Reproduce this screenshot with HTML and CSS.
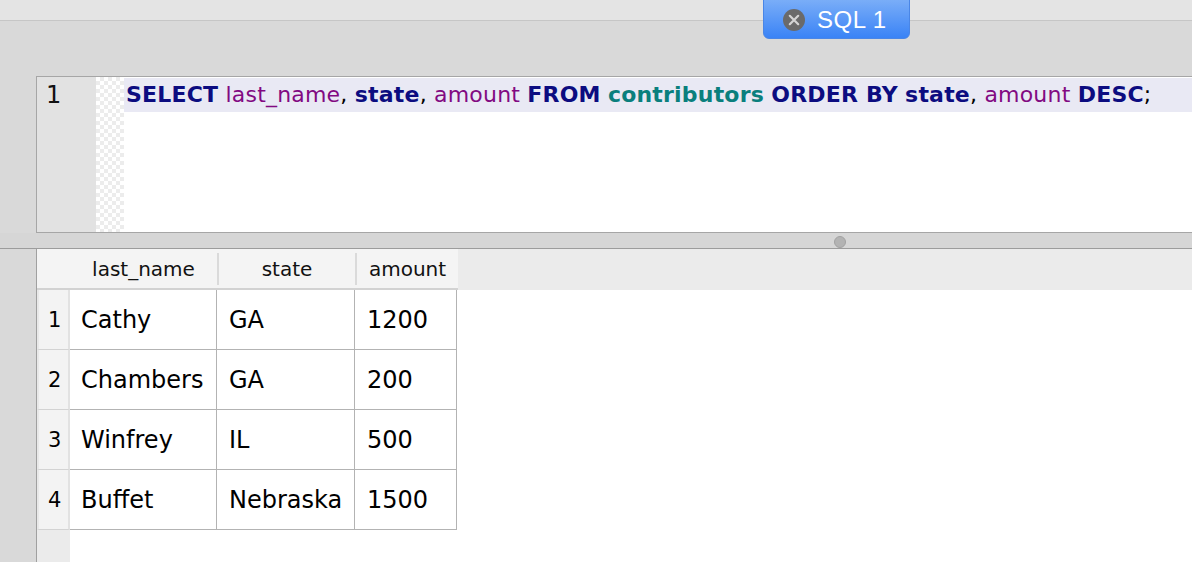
FILE: index.html
```html
<!DOCTYPE html>
<html>
<head>
<meta charset="utf-8">
<link rel="stylesheet" href="styles.css">
</head>
<body>
<div class="titlebar"></div>
<div class="tab">
  <svg class="tab-close" width="22" height="22" viewBox="0 0 22 22">
    <circle cx="11" cy="11" r="11" fill="#6a6a6a"/>
    <path d="M6.8 6.8 L15.2 15.2 M15.2 6.8 L6.8 15.2" stroke="#d4d4d4" stroke-width="2.2" stroke-linecap="round"/>
  </svg>
  <span class="tab-label">SQL 1</span>
</div>
<div class="main">
  <div class="editor">
    <div class="gutter"><div class="lineno">1</div></div>
    <div class="checker"></div>
    <div class="code">
      <div class="line current"><span class="kw">SELECT</span> <span class="id">last_name</span>, <span class="kw">state</span>, <span class="id">amount</span> <span class="kw">FROM</span> <span class="tbl">contributors</span> <span class="kw">ORDER BY</span> <span class="kw">state</span>, <span class="id">amount</span> <span class="kw">DESC</span>;</div>
    </div>
  </div>
  <div class="splitter"><div class="grip"></div></div>
  <div class="results">
    <div class="hrow">
      <div class="hcols">
        <div class="hcell c-num"></div>
        <div class="hcell c-name">last_name</div>
        <div class="hcell c-state sep">state</div>
        <div class="hcell c-amt sep">amount</div>
      </div>
    </div>
    <div class="row">
      <div class="num">1</div><div class="cell c-name">Cathy</div><div class="cell c-state">GA</div><div class="cell c-amt">1200</div>
    </div>
    <div class="row">
      <div class="num">2</div><div class="cell c-name">Chambers</div><div class="cell c-state">GA</div><div class="cell c-amt">200</div>
    </div>
    <div class="row">
      <div class="num">3</div><div class="cell c-name">Winfrey</div><div class="cell c-state">IL</div><div class="cell c-amt">500</div>
    </div>
    <div class="row">
      <div class="num">4</div><div class="cell c-name">Buffet</div><div class="cell c-state">Nebraska</div><div class="cell c-amt">1500</div>
    </div>
  </div>
</div>
</body>
</html>
```
FILE: styles.css
```css
html, body {
  margin: 0;
  padding: 0;
  height: 100%;
  overflow: hidden;
}
body {
  background: #d9d9d9;
  font-family: "DejaVu Sans", "Liberation Sans", sans-serif;
  color: #000;
  position: relative;
}
.titlebar {
  height: 20px;
  background: #e4e4e4;
  border-bottom: 1px solid #c6c6c6;
}
.tab {
  position: absolute;
  left: 763px;
  top: -6px;
  width: 147px;
  height: 45px;
  box-sizing: border-box;
  border-radius: 6px;
  background: linear-gradient(#82b3f8, #3a83f6);
  border: 1px solid #4a86e6;
  display: flex;
  align-items: center;
  padding: 6px 0 0 19px;
  gap: 12px;
}
.tab-close { flex: none; }
.tab-label {
  font-family: "Liberation Sans", "Helvetica", sans-serif;
  color: #fff;
  font-size: 24px;
  letter-spacing: 0.5px;
  line-height: 1;
  margin-top: 1px;
}
.main {
  padding: 55px 0 0 36px;
  height: calc(100% - 21px);
  box-sizing: border-box;
  display: flex;
  flex-direction: column;
}
.editor {
  height: 157px;
  box-sizing: border-box;
  border: 1px solid #a6a6a6;
  border-right: none;
  display: flex;
  flex: none;
}
.gutter {
  width: 59px;
  background: #e2e2e2;
  flex: none;
}
.lineno {
  font-size: 24px;
  line-height: 34px;
  margin-top: 1px;
  padding-left: 9px;
  color: #111;
}
.checker {
  width: 28px;
  flex: none;
  background-color: #fff;
  background-image: repeating-conic-gradient(#ececec 0 25%, #fff 0 50%);
  background-size: 8px 8px;
}
.code {
  flex: 1;
  background: #fff;
  padding-top: 1px;
}
.line {
  font-size: 22px;
  letter-spacing: 0.2px;
  line-height: 34px;
  height: 34px;
  padding-left: 2px;
  white-space: nowrap;
  color: #000;
}
.line.current { background: #e9e9f4; }
.kw { color: #0c0c80; font-weight: bold; }
.id { color: #820a82; }
.tbl { color: #0a7f7d; font-weight: bold; }

.splitter {
  height: 15px;
  flex: none;
  margin-left: -36px;
  padding-left: 36px;
  border-bottom: 1px solid #9c9c9c;
  background: #d6d6d6;
  display: flex;
  align-items: center;
}
.grip {
  width: 12px;
  height: 12px;
  box-sizing: border-box;
  border-radius: 50%;
  background: #b3b3b3;
  border: 1px solid #a2a2a2;
  margin-left: 798px;
  margin-top: 3px;
}
.results {
  flex: 1;
  border-left: 1px solid #a0a0a0;
  background: linear-gradient(to right, #ebebeb 33px, #fff 33px);
}
.hrow {
  height: 41px;
  background: #ebebeb;
  display: flex;
}
.hcols {
  display: flex;
  width: 421px;
  background: #f4f4f4;
  border-bottom: 2px solid #d2d2d2;
  align-items: center;
  font-size: 20px;
  color: #111;
}
.hcell {
  height: 32px;
  line-height: 32px;
  text-align: center;
  box-sizing: border-box;
}
.hcell.sep { border-left: 2px solid #dadada; }
.hcell.c-num { width: 33px; }
.hcell.c-name { width: 147px; }
.hcell.c-state { width: 138px; }
.hcell.c-amt { width: 103px; }
.row {
  display: flex;
  height: 60px;
}
.num {
  width: 33px;
  box-sizing: border-box;
  background: #f3f3f3;
  border-left: 2px solid #e8e8e8;
  border-right: 2px solid #e2e2e2;
  border-bottom: 1px solid #d3d3d3;
  font-size: 21px;
  padding-left: 9px;
  padding-top: 2px;
  line-height: 56px;
}
.cell {
  box-sizing: border-box;
  border-right: 1px solid #b3b3b3;
  border-bottom: 1px solid #b3b3b3;
  font-size: 24px;
  line-height: 56px;
  padding-top: 2px;
  padding-left: 11px;
  background: #fff;
  white-space: nowrap;
}
.cell.c-name { width: 147px; }
.cell.c-state { width: 138px; padding-left: 12px; }
.cell.c-amt { width: 102px; padding-left: 12px; }
```
